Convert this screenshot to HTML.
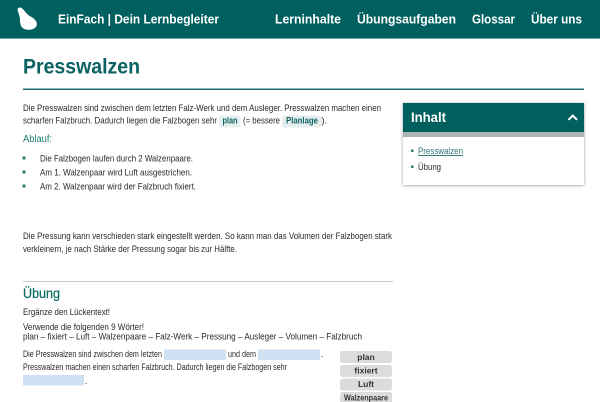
<!DOCTYPE html>
<html lang="de">
<head>
<meta charset="utf-8">
<title>Presswalzen</title>
<style>
html,body{margin:0;padding:0;background:#fff;width:600px;height:402px;overflow:hidden}
svg{display:block;filter:blur(.35px)}
text{font-family:"Liberation Sans",sans-serif;fill:#2a2a2a;font-size:9.300px}
.h{fill:#fff;font-weight:bold;font-size:13px}
.g{fill:#0f6464}
.b{font-weight:bold;text-anchor:middle;font-size:8.500px;fill:#333}
.s{font-size:8.800px}
</style>
</head>
<body>
<svg xmlns="http://www.w3.org/2000/svg" width="600" height="402" viewBox="0 0 600 402">
<defs>
<filter id="s" x="-10%" y="-10%" width="120%" height="120%"><feDropShadow dx="0" dy="0.5" stdDeviation="1.5" flood-color="#000" flood-opacity=".4"/></filter>
</defs>
<rect width="600" height="38" fill="#005f5f"/>
<rect y="38" width="600" height="1" fill="#6fa5a8"/>
<path d="M17.500 9.500C17.500 7.500 20 7 21.500 8C24 9.500 25.500 13 29 15.500C33 18 37.500 20.500 36.800 25C36 29 30.500 30.500 26 29.500C21 28.500 20 24.500 20 20C20 16 18 12.500 17.500 9.500Z" fill="#fff"/>
<text class="h" x="58" y="23.500" textLength="161" lengthAdjust="spacingAndGlyphs">EinFach | Dein Lernbegleiter</text>
<text class="h" x="275" y="23.500" textLength="66" lengthAdjust="spacingAndGlyphs">Lerninhalte</text>
<text class="h" x="357" y="23.500" textLength="99" lengthAdjust="spacingAndGlyphs">Übungsaufgaben</text>
<text class="h" x="472" y="23.500" textLength="43" lengthAdjust="spacingAndGlyphs">Glossar</text>
<text class="h" x="531" y="23.500" textLength="51" lengthAdjust="spacingAndGlyphs">Über uns</text>

<text class="g" x="23" y="73.500" font-weight="bold" style="font-size:21px;fill:#0b6262" textLength="117" lengthAdjust="spacingAndGlyphs">Presswalzen</text>
<rect x="23" y="88.500" width="561" height="1.500" fill="#1f6f76"/>

<text x="23" y="111" textLength="358" lengthAdjust="spacingAndGlyphs">Die Presswalzen sind zwischen dem letzten Falz-Werk und dem Ausleger. Presswalzen machen einen</text>
<text x="23" y="123.500" textLength="194" lengthAdjust="spacingAndGlyphs">scharfen Falzbruch. Dadurch liegen die Falzbogen sehr</text>
<rect x="219" y="115.500" width="21.500" height="12" rx="3" fill="#e6efee"/>
<text x="222.500" y="123.500" font-weight="bold" class="g" textLength="15" lengthAdjust="spacingAndGlyphs">plan</text>
<text x="243" y="123.500" textLength="37" lengthAdjust="spacingAndGlyphs">(= bessere</text>
<rect x="282" y="115.500" width="40" height="12" rx="3" fill="#e6efee"/>
<text x="286" y="123.500" font-weight="bold" class="g" textLength="32" lengthAdjust="spacingAndGlyphs">Planlage</text>
<text x="321.500" y="123.500">).</text>

<text class="g" x="23" y="142" style="font-size:10px;fill:#1d7a70" textLength="29" lengthAdjust="spacingAndGlyphs">Ablauf:</text>

<rect x="22.500" y="156.500" width="3" height="3" fill="#2f7c70"/>
<rect x="22.500" y="170.500" width="3" height="3" fill="#2f7c70"/>
<rect x="22.500" y="184.500" width="3" height="3" fill="#2f7c70"/>
<text x="40" y="161.500" textLength="153" lengthAdjust="spacingAndGlyphs">Die Falzbogen laufen durch 2 Walzenpaare.</text>
<text x="40" y="175.500" textLength="152" lengthAdjust="spacingAndGlyphs">Am 1. Walzenpaar wird Luft ausgestrichen.</text>
<text x="40" y="189.500" textLength="156" lengthAdjust="spacingAndGlyphs">Am 2. Walzenpaar wird der Falzbruch fixiert.</text>

<text x="23" y="239" textLength="369" lengthAdjust="spacingAndGlyphs">Die Pressung kann verschieden stark eingestellt werden. So kann man das Volumen der Falzbogen stark</text>
<text x="23" y="252" textLength="214" lengthAdjust="spacingAndGlyphs">verkleinern, je nach Stärke der Pressung sogar bis zur Hälfte.</text>

<rect x="23" y="281" width="370" height="1" fill="#c8c8c8"/>
<text class="g" x="23" y="298" style="font-size:13.500px;fill:#0f6e64;stroke:#0f6e64;stroke-width:.25" textLength="37" lengthAdjust="spacingAndGlyphs">Übung</text>
<text x="23" y="315" textLength="87" lengthAdjust="spacingAndGlyphs">Ergänze den Lückentext!</text>
<text x="23" y="330" textLength="121" lengthAdjust="spacingAndGlyphs">Verwende die folgenden 9 Wörter!</text>
<text x="23" y="339.500" textLength="339" lengthAdjust="spacingAndGlyphs">plan – fixiert – Luft – Walzenpaare – Falz-Werk – Pressung – Ausleger – Volumen – Falzbruch</text>

<text class="s" x="23" y="357" textLength="139" lengthAdjust="spacingAndGlyphs">Die Presswalzen sind zwischen dem letzten</text>
<rect x="164" y="349.500" width="62" height="10.500" fill="#cfe0f3"/>
<text class="s" x="228" y="357" textLength="28" lengthAdjust="spacingAndGlyphs">und dem</text>
<rect x="258" y="349.500" width="62" height="10.500" fill="#cfe0f3"/>
<text class="s" x="321" y="357">.</text>
<text class="s" x="23" y="370" textLength="264" lengthAdjust="spacingAndGlyphs">Presswalzen machen einen scharfen Falzbruch. Dadurch liegen die Falzbogen sehr</text>
<rect x="23" y="375" width="61" height="10.500" fill="#cfe0f3"/>
<text class="s" x="85" y="384">.</text>

<rect x="340" y="351" width="52" height="12" rx="2.500" fill="#dcdcdc"/>
<rect x="340" y="365" width="52" height="12" rx="2.500" fill="#dcdcdc"/>
<rect x="340" y="378.500" width="52" height="12" rx="2.500" fill="#dcdcdc"/>
<rect x="340" y="392" width="52" height="12" rx="2.500" fill="#dcdcdc"/>
<text class="b" x="366" y="360">plan</text>
<text class="b" x="366" y="373.500">fixiert</text>
<text class="b" x="366" y="387">Luft</text>
<text class="b" x="366" y="400.500" textLength="44" lengthAdjust="spacingAndGlyphs">Walzenpaare</text>

<rect x="403" y="103" width="181" height="82" fill="#fff" filter="url(#s)"/>
<rect x="403" y="103" width="181" height="29" fill="#005f5f"/>
<rect x="403" y="132" width="181" height="5" fill="#a9b4b4"/>
<text x="411" y="122" style="font-size:14px;fill:#fff;font-weight:bold" textLength="35" lengthAdjust="spacingAndGlyphs">Inhalt</text>
<path d="M568.500 119.800L572.800 115.500L577 119.800" fill="none" stroke="#fff" stroke-width="2"/>
<rect x="411" y="149.500" width="2.500" height="2.500" fill="#2f7c70"/>
<rect x="411" y="165.500" width="2.500" height="2.500" fill="#2f7c70"/>
<text x="418" y="154" class="g" style="fill:#2c7570;text-decoration:underline" textLength="45" lengthAdjust="spacingAndGlyphs">Presswalzen</text>
<text x="418" y="170" textLength="23" lengthAdjust="spacingAndGlyphs">Übung</text>
</svg>
</body>
</html>
